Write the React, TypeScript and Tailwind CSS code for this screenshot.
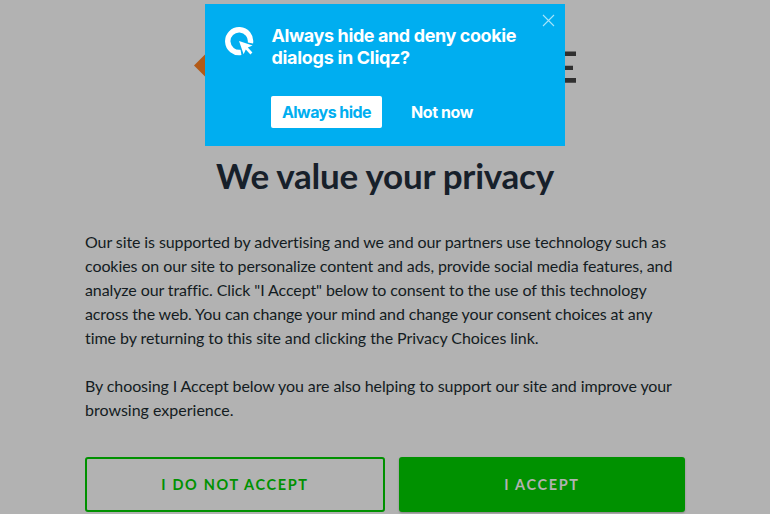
function CliqzLogo() {
  return (
    <svg width="30" height="30" viewBox="0 0 30 30" className="shrink-0">
      <path d="M16 25.4A11.4 11.4 0 1 1 25.4 16" fill="none" stroke="#fff" strokeWidth="5.4" />
      <path
        d="M14 14L27.6 18.6L22.8 20.6L27.4 25.6L25.4 27.4L20.8 22.4L18.6 27.2Z"
        fill="#fff"
        stroke="#00aef0"
        strokeWidth="2.2"
        paintOrder="stroke"
      />
    </svg>
  );
}

function CookiePrompt() {
  return (
    <div className="absolute left-[205px] top-1 flex h-[142px] w-[360px] bg-[#00aef0] pl-5 pt-[21px] font-['Inter',sans-serif] font-semibold text-white">
      <div className="pt-[2px]">
        <CliqzLogo />
      </div>
      <div className="ml-4 flex flex-col items-start">
        <p className="whitespace-nowrap pl-[0.5px] text-[18px] font-bold leading-[22px] tracking-[-0.4px]">
          Always hide and deny cookie
          <br />
          <span className="tracking-[-0.3px]">dialogs in Cliqz?</span>
        </p>
        <div className="mt-[27px] flex text-[16px] font-bold tracking-[-0.55px]">
          <button className="h-8 w-[111px] whitespace-nowrap rounded-[2px] bg-white text-[#00aef0]">Always hide</button>
          <button className="ml-[29px] h-8 whitespace-nowrap tracking-[-0.4px]">Not now</button>
        </div>
      </div>
      <svg className="absolute right-[10px] top-[10px]" width="13" height="13" viewBox="0 0 13 13">
        <path d="M1 1L12 12M12 1L1 12" stroke="#a6e3fa" strokeWidth="1.1" />
      </svg>
    </div>
  );
}

export default function App() {
  return (
    <div className="relative h-[514px] w-[770px] overflow-hidden bg-[#b2b2b2] px-[85px] font-['Lato',sans-serif] text-[#141c22]">
      <div className="-mx-[85px] h-[146px]">
        <svg width="770" height="146" viewBox="0 0 770 146">
          <path d="M194 65.5L216 43.5V87.5Z" fill="#b25a17" />
          <path d="M555 51.5H576V56H555ZM555 65.7H573V70H555ZM555 78H576V82.7H555Z" fill="#303030" />
        </svg>
      </div>
      <h1 className="whitespace-nowrap text-center text-[35px] font-bold leading-[58px] tracking-[-0.25px] text-[#17202a]">We value your privacy</h1>
      <div className="mt-[26px] whitespace-nowrap text-[16px] leading-6">
        <p>
          <span className="tracking-[-0.095px]">Our site is supported by advertising and we and our partners use technology such as</span>
          <br />
          <span className="tracking-[-0.09px]">cookies on our site to personalize content and ads, provide social media features, and</span>
          <br />
          <span className="tracking-[-0.1px]">analyze our traffic. Click "I Accept" below to consent to the use of this technology</span>
          <br />
          <span className="tracking-[-0.125px]">across the web. You can change your mind and change your consent choices at any</span>
          <br />
          <span className="tracking-[-0.065px]">time by returning to this site and clicking the Privacy Choices link.</span>
        </p>
        <p className="mt-6">
          <span className="tracking-[-0.1px]">By choosing I Accept below you are also helping to support our site and improve your</span>
          <br />
          browsing experience.
        </p>
      </div>
      <div className="mt-[35px] flex gap-[14px] text-[14.5px] font-bold tracking-[1.65px]">
        <button className="h-[55px] w-[300px] rounded-[3px] border-2 border-[#009100] text-[#009100]">I DO NOT ACCEPT</button>
        <button className="h-[55px] w-[286px] rounded-[3px] bg-[#009100] text-[#b2b2b2] shadow-[0_1px_2px_rgba(0,0,0,0.25)]">
          I ACCEPT
        </button>
      </div>
      <CookiePrompt />
    </div>
  );
}
